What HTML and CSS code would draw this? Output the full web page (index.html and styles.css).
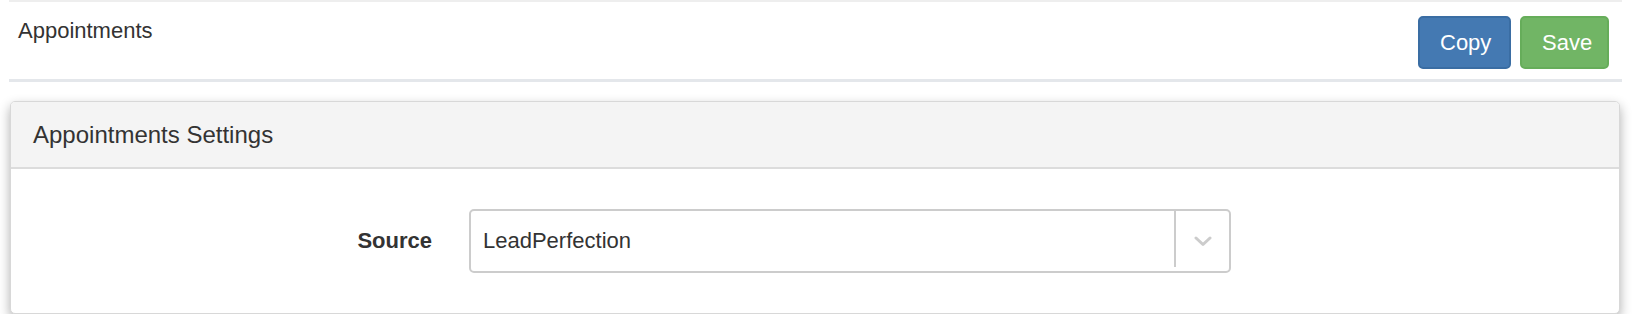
FILE: index.html
```html
<!DOCTYPE html>
<html lang="en">
<head>
<meta charset="utf-8">
<title>Appointments</title>
<link rel="stylesheet" href="styles.css">
</head>
<body>
<div class="page">
  <div class="topbar">
    <div class="title">Appointments</div>
    <div class="actions">
      <button class="btn btn-copy" type="button">Copy</button>
      <button class="btn btn-save" type="button">Save</button>
    </div>
  </div>
  <div class="panel">
    <div class="panel-heading">Appointments Settings</div>
    <div class="panel-body">
      <div class="form-row">
        <label class="form-label">Source</label>
        <div class="select">
          <div class="select-value">LeadPerfection</div>
          <span class="select-sep"></span>
          <div class="select-indicator">
            <svg width="18" height="11" viewBox="0 0 18 11" aria-hidden="true"><path d="M2 2 L9 8.5 L16 2" fill="none" stroke="#cccccc" stroke-width="3" stroke-linecap="round" stroke-linejoin="round"/></svg>
          </div>
        </div>
      </div>
    </div>
  </div>
</div>
</body>
</html>
```

FILE: styles.css
```css
html, body {
  margin: 0;
  padding: 0;
  background: #ffffff;
}
body {
  font-family: "Liberation Sans", Arial, Helvetica, sans-serif;
  color: #333333;
}
.page {
  padding: 0 12px 0 9px;
}
.topbar {
  display: flex;
  justify-content: space-between;
  align-items: flex-start;
  border-top: 2px solid #eeeeee;
  border-bottom: 3px solid #e4e7eb;
  height: 77px;
}
.title {
  font-size: 22px;
  line-height: 31px;
  padding: 13px 0 0 9px;
}
.actions {
  display: flex;
  gap: 9px;
  padding-top: 14px;
  margin-right: 13px;
}
.btn {
  font-family: "Liberation Sans", Arial, Helvetica, sans-serif;
  font-size: 22px;
  color: #ffffff;
  height: 53px;
  border-radius: 5px;
  border: 2px solid transparent;
  padding: 0 20px;
  cursor: pointer;
}
.btn-copy {
  width: 93px;
  background: #4479b2;
  border-color: #3a6da3;
}
.btn-save {
  width: 89px;
  background: #71b565;
  border-color: #66ad5a;
}
.panel {
  margin: 19px 2px 0 1px;
  border: 1px solid #d8d8d8;
  border-radius: 5px;
  background: #ffffff;
  box-shadow: 0 5px 12px rgba(0, 0, 0, 0.32);
  overflow: hidden;
}
.panel-heading {
  background: #f4f4f4;
  border-bottom: 2px solid #dcdcdc;
  font-size: 24px;
  line-height: 31px;
  padding: 17px 22px 17px;
  color: #333333;
}
.panel-body {
  padding: 40px 0 40px 0;
}
.form-row {
  display: flex;
  align-items: center;
}
.form-label {
  width: 421px;
  text-align: right;
  font-weight: bold;
  font-size: 22px;
  margin-right: 37px;
  color: #333333;
}
.select {
  display: flex;
  width: 762px;
  height: 64px;
  box-sizing: border-box;
  border: 2px solid #cccccc;
  border-radius: 5px;
  background: #ffffff;
}
.select-value {
  flex: 1;
  display: flex;
  align-items: center;
  padding-left: 12px;
  font-size: 22px;
  color: #333333;
}
.select-sep {
  width: 2px;
  background: #cccccc;
  margin-bottom: 4px;
}
.select-indicator {
  width: 53px;
  display: flex;
  align-items: center;
  justify-content: center;
}
```
